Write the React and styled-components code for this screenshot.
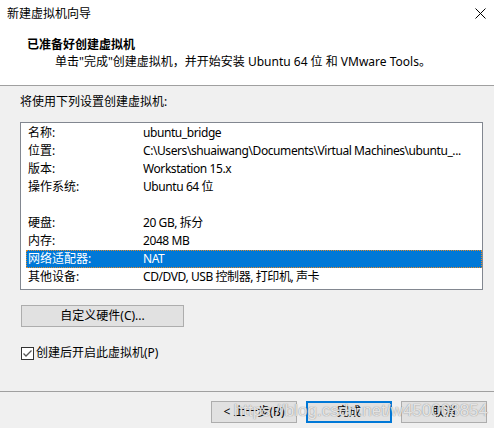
import React from "react";
import styled, { createGlobalStyle } from "styled-components";

const GlobalStyle = createGlobalStyle`
  html, body {
    margin: 0;
    padding: 0;
    background: #f0f0f0;
  }
  body {
    font-family: "Segoe UI", "Noto Sans", "Noto Sans CJK SC", sans-serif;
    font-size: 12px;
    color: #000;
  }
`;

const settings = [
  { label: "名称:", value: "ubuntu_bridge" },
  { label: "位置:", value: "C:\\Users\\shuaiwang\\Documents\\Virtual Machines\\ubuntu_..." },
  { label: "版本:", value: "Workstation 15.x" },
  { label: "操作系统:", value: "Ubuntu 64 位" },
  { label: "", value: "" },
  { label: "硬盘:", value: "20 GB, 拆分" },
  { label: "内存:", value: "2048 MB" },
  { label: "网络适配器:", value: "NAT", selected: true },
  { label: "其他设备:", value: "CD/DVD, USB 控制器, 打印机, 声卡" },
];

function App() {
  return (
    <Dialog>
      <GlobalStyle />
      <Header>
        <TitleBar>
          <span>新建虚拟机向导</span>
          <CloseIcon width="11" height="11" viewBox="0 0 11 11">
            <path d="M0.5 0.5 L10.5 10.5 M10.5 0.5 L0.5 10.5" stroke="#000" strokeWidth="1" />
          </CloseIcon>
        </TitleBar>
        <Heading>已准备好创建虚拟机</Heading>
        <SubText>单击"完成"创建虚拟机，并开始安装 Ubuntu 64 位 和 VMware Tools。</SubText>
      </Header>

      <Body>
        <Intro>将使用下列设置创建虚拟机:</Intro>
        <ListBox>
          {settings.map((row, i) => (
            <Row key={i} $selected={row.selected}>
              <Label>{row.label}</Label>
              <Value>{row.value}</Value>
            </Row>
          ))}
        </ListBox>
        <Button $wide>自定义硬件(C)...</Button>
        <CheckRow>
          <CheckBox>
            <svg width="11" height="11" viewBox="0 0 11 11">
              <path d="M1.5 5.5 L4 8 L9.5 2.5" fill="none" stroke="#555" strokeWidth="1.3" />
            </svg>
          </CheckBox>
          <span>创建后开启此虚拟机(P)</span>
        </CheckRow>
      </Body>

      <Footer>
        <Button>&lt; 上一步(B)</Button>
        <Button $primary>完成</Button>
        <Button>取消</Button>
        <Watermark>https://blog.csdn.net/w450008854</Watermark>
      </Footer>
    </Dialog>
  );
}

const Dialog = styled.div`
  width: 494px;
  height: 428px;
  display: flex;
  flex-direction: column;
  overflow: hidden;
  background: #f0f0f0;
`;

const Header = styled.div`
  height: 85px;
  background: #fff;
  border-bottom: 1px solid #a0a0a0;
`;

const TitleBar = styled.div`
  height: 28px;
  padding: 0 8px 0 7px;
  display: flex;
  align-items: center;
  justify-content: space-between;
  line-height: 16px;
`;

const CloseIcon = styled.svg`
  display: block;
  margin-top: -1px;
`;

const Heading = styled.div`
  margin: 9px 0 0 27px;
  line-height: 16px;
  font-weight: bold;
`;

const SubText = styled.div`
  margin: 1px 0 0 55px;
  line-height: 16px;
`;

const Body = styled.div`
  padding: 8px 11px 0 20px;
`;

const Intro = styled.div`
  line-height: 16px;
`;

const ListBox = styled.div`
  margin-top: 12px;
  height: 168px;
  box-sizing: border-box;
  border: 1px solid #828790;
  background: #fff;
  padding: 1px 0 0 5px;
`;

const Row = styled.div`
  height: 18px;
  display: grid;
  grid-template-columns: 117px 1fr;
  align-items: center;
  line-height: 16px;
  white-space: nowrap;
  background: ${(p) => (p.$selected ? "#0078d7" : "transparent")};
  color: ${(p) => (p.$selected ? "#fff" : "#000")};
  outline: ${(p) => (p.$selected ? "1px dotted #e08a2c" : "none")};
  outline-offset: -1px;
`;

const Label = styled.span`
  padding-left: 2px;
`;

const Value = styled.span`
  letter-spacing: -0.42px;
  overflow: hidden;
`;

const Button = styled.button`
  font: inherit;
  color: #000;
  box-sizing: border-box;
  height: 22px;
  width: ${(p) => (p.$wide ? "163px" : "86px")};
  margin: ${(p) => (p.$wide ? "15px 0 0 1px" : "0")};
  padding: 0;
  background: #e1e1e1;
  border: ${(p) => (p.$primary ? "2px solid #0078d7" : "1px solid #adadad")};
  line-height: 16px;
`;

const CheckRow = styled.div`
  margin: 18px 0 0 1px;
  display: flex;
  align-items: center;
  gap: 2px;
  line-height: 16px;
`;

const CheckBox = styled.span`
  width: 13px;
  height: 13px;
  box-sizing: border-box;
  border: 1px solid #333;
  background: #fff;
  display: flex;
  align-items: center;
  justify-content: center;
`;

const Footer = styled.div`
  position: relative;
  margin-top: auto;
  height: 37px;
  border-top: 1px solid #a0a0a0;
  display: flex;
  justify-content: flex-end;
  align-items: flex-start;
  gap: 9px;
  padding: 9px 7px 0 0;
  box-sizing: border-box;
`;

const Watermark = styled.span`
  position: absolute;
  right: 6px;
  top: 9px;
  font-family: "Liberation Sans", Arial, sans-serif;
  font-size: 17px;
  color: rgba(255, 255, 255, 0.75);
  text-shadow: 0 0 1px rgba(120, 120, 120, 0.6), 0 0 1px rgba(120, 120, 120, 0.6);
  pointer-events: none;
  white-space: nowrap;
`;

export default App;
